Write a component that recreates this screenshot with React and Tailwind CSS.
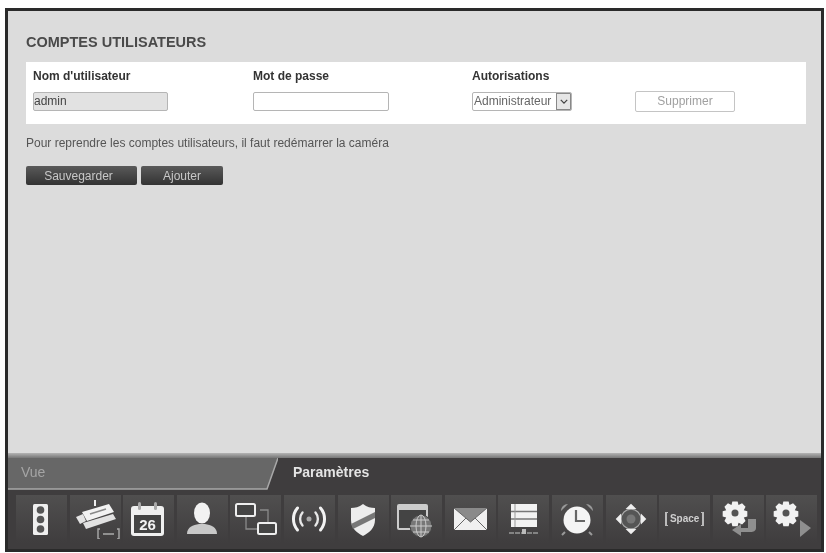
const Gear = () => (
  <g transform="translate(16 14) scale(0.88)">
    <path d="M-3-13h6l1 4 4-2 4 4-2 4 4 1v6l-4 1 2 4-4 4-4-2-1 4h-6l-1-4-4 2-4-4 2-4-4-1v-6l4-1-2-4 4-4 4 2z" fill="#f2f2f2" />
    <circle r="4" fill="#555" />
  </g>
);

const cells = [
  // feux
  <svg viewBox="0 0 40 40" className="w-10 h-10 -translate-x-[2px]" key="feux">
    <rect x="13" y="5" width="15" height="31" rx="1.5" fill="#efefef" />
    <circle cx="20.5" cy="11" r="3.8" fill="#555" />
    <circle cx="20.5" cy="20.5" r="3.8" fill="#555" />
    <circle cx="20.5" cy="30" r="3.8" fill="#555" />
  </svg>,
  // caméra
  <svg viewBox="0 0 48 40" className="w-12 h-10 translate-x-[2px]" key="cam">
    <path d="M22 1v6" stroke="#eee" strokeWidth="2" />
    <path d="M9 13 36 5l5 8-27 9z" fill="#f2f2f2" />
    <path d="M3 18l7-3 3 7-6 3z" fill="#e4e4e4" />
    <path d="M10 24 40 15l3 5-30 10z" fill="#e2e2e2" />
    <path d="M17 15 33 10" stroke="#888" strokeWidth="1.500" />
    <path d="M27 30h-2v10h2M44 30h2v10h-2M30 35h11" stroke="#aaa" strokeWidth="1.400" fill="none" />
  </svg>,
  // calendrier
  <svg viewBox="0 0 40 40" className="w-10 h-10 -translate-x-[2px]" key="cal">
    <rect x="4" y="7" width="33" height="30" rx="3" fill="#f0f0f0" />
    <rect x="7" y="16" width="27" height="18" fill="#444" />
    <rect x="11" y="3" width="3" height="8" rx="1.500" fill="#aaa" />
    <rect x="27" y="3" width="3" height="8" rx="1.500" fill="#aaa" />
    <text x="20.500" y="31" textAnchor="middle" fontSize="15" fontWeight="700" fill="#f2f2f2" fontFamily="Liberation Sans, sans-serif">26</text>
  </svg>,
  // utilisateur
  <svg viewBox="0 0 40 40" className="w-10 h-10" key="user">
    <ellipse cx="20" cy="14" rx="8" ry="10.500" fill="#f2f2f2" />
    <path d="M5 35c0-7 6-9 12-10h6c6 1 12 3 12 10z" fill="#c8c8c8" />
  </svg>,
  // réseau
  <svg viewBox="0 0 48 40" className="w-12 h-10" key="net">
    <path d="M14 18v12h14M28 11h8v12" stroke="#8a8a8a" strokeWidth="1.300" fill="none" />
    <rect x="4" y="5" width="19" height="12" rx="1.500" fill="#444" stroke="#eee" strokeWidth="2" />
    <rect x="26" y="24" width="18" height="11" rx="1.500" fill="#444" stroke="#eee" strokeWidth="2" />
  </svg>,
  // sans fil
  <svg viewBox="0 0 40 40" className="w-10 h-10" key="wifi">
    <circle cx="20" cy="20" r="2.500" fill="#aaa" />
    <path d="M13.500 13.500a10 10 0 0 0 0 13M26.500 13.500a10 10 0 0 1 0 13" stroke="#e8e8e8" strokeWidth="2.400" fill="none" strokeLinecap="round" />
    <path d="M8.500 9a17 17 0 0 0 0 22M31.500 9a17 17 0 0 1 0 22" stroke="#f2f2f2" strokeWidth="3" fill="none" strokeLinecap="round" />
  </svg>,
  // bouclier
  <svg viewBox="0 0 40 40" className="w-10 h-10" key="shield">
    <path d="M20 5c4 3 8 4 12 4v12c0 8-6 13-12 16C14 34 8 29 8 21V9c4 0 8-1 12-4z" fill="#ededed" />
    <path d="M8 25 32 13v6L10 30z" fill="#777" />
  </svg>,
  // web
  <svg viewBox="0 0 44 40" className="w-11 h-10" key="web">
    <rect x="3" y="6" width="29" height="24" rx="1" fill="#444" stroke="#ccc" strokeWidth="2" />
    <rect x="3" y="6" width="29" height="5" fill="#ccc" />
    <circle cx="26" cy="27" r="11" fill="#777" stroke="#444" strokeWidth="1" />
    <path d="M15 27h22M26 16v22M18 21h16M18 33h16" stroke="#ccc" strokeWidth="1" />
    <ellipse cx="26" cy="27" rx="5" ry="11" fill="none" stroke="#ccc" strokeWidth="1" />
  </svg>,
  // courrier
  <svg viewBox="0 0 40 40" className="w-10 h-10" key="mail">
    <rect x="4" y="9" width="33" height="22" fill="#f0f0f0" />
    <path d="M4 9h33L20.500 23z" fill="#8a8a8a" />
    <path d="M4 9l16.500 14L37 9M4 31l12-12M37 31 25 19" stroke="#666" strokeWidth="1" fill="none" />
  </svg>,
  // liste
  <svg viewBox="0 0 40 40" className="w-10 h-10 -translate-x-[1px]" key="list">
    <rect x="8" y="5" width="26" height="23" fill="#f2f2f2" />
    <path d="M8 12.500h26M8 20h26" stroke="#777" strokeWidth="1.500" />
    <path d="M12 5v23" stroke="#999" strokeWidth="1" />
    <path d="M6 34h29" stroke="#999" strokeWidth="1.500" strokeDasharray="5 1" />
    <rect x="19" y="30" width="4" height="5" fill="#bbb" />
  </svg>,
  // réveil
  <svg viewBox="0 0 40 40" className="w-10 h-10" key="clock">
    <path d="M4 12c0-4 3-7 7-7zM36 12c0-4-3-7-7-7z" fill="#999" />
    <path d="M8 33l-3 3M32 33l3 3" stroke="#999" strokeWidth="2" />
    <circle cx="20" cy="21" r="13.500" fill="#f4f4f4" />
    <path d="M19 11v11h9" stroke="#666" strokeWidth="2.200" fill="none" />
  </svg>,
  // directions
  <svg viewBox="0 0 40 40" className="w-9 h-9" key="pad">
    <circle cx="20" cy="20" r="11" fill="#555" stroke="#aaa" strokeWidth="1.200" />
    <circle cx="20" cy="20" r="5" fill="#777" />
    <path d="M20 3l6 6H14zM20 37l6-6H14zM3 20l6-6v12zM37 20l-6-6v12z" fill="#eee" />
  </svg>,
  // space
  <div key="space" className="flex items-center gap-[2px] text-[#cfcfcf] font-bold text-[10px] leading-none">
    <span className="w-[3px] h-[14px] border-l-2 border-y border-[#bbb]" />
    <span>Space</span>
    <span className="w-[3px] h-[14px] border-r-2 border-y border-[#bbb]" />
  </div>,
  // roue + retour
  <svg viewBox="0 0 44 40" className="w-11 h-10 translate-x-[3px]" key="gearback">
    <Gear />
    <path d="M37 20v9c0 3-3 4-5 4H22v4l-9-6 9-6v4h7v-9z" fill="#8f8f8f" />
  </svg>,
  // roue + lecture
  <svg viewBox="0 0 44 40" className="w-11 h-10" key="gearplay">
    <Gear />
    <path d="M30 21l11 8-11 9z" fill="#8f8f8f" />
  </svg>,
];

const Label = ({ children }) => (
  <div className="font-bold text-[12px] text-[#333] leading-3">{children}</div>
);

const App = () => {
  return (
    <div className="w-[826px] h-[553px] bg-white pt-2 pl-[5px] pr-[2px] pb-[1px] overflow-hidden font-['Liberation_Sans',Arial,sans-serif]">
      <div className="h-full flex flex-col border-[3px] border-[#2a2a2a] blur-[0.7px]">
        {/* Contenu */}
        <main className="flex-1 bg-[#dcdcdc] pt-6 pl-[18px] pr-[15px]">
          <h1 className="font-bold text-[14.5px] leading-[14px] text-[#4a4a4a]">COMPTES UTILISATEURS</h1>

          <div className="mt-[13px] h-[62px] bg-white pl-[7px] pt-2 flex">
            <div className="w-[220px]">
              <Label>Nom d'utilisateur</Label>
              <div className="mt-[10px] w-[135px] h-[19px] bg-[#e2e2e2] border border-[#b5b5b5] rounded-[2px] text-[12px] leading-[17px] text-[#444]">admin</div>
            </div>
            <div className="w-[219px]">
              <Label>Mot de passe</Label>
              <div className="mt-[10px] w-[136px] h-[19px] bg-white border border-[#b5b5b5] rounded-[2px]" />
            </div>
            <div className="w-[163px]">
              <Label>Autorisations</Label>
              <div className="mt-[10px] w-[100px] h-[19px] flex border border-[#b5b5b5] rounded-[2px] text-[12px] leading-[17px] text-[#666] pl-[1px] overflow-hidden">
                <span className="flex-1 whitespace-nowrap">Administrateur</span>
                <span className="shrink-0 w-[15px] h-[17px] bg-[#e6e6e6] border border-[#888] flex items-center justify-center">
                  <svg viewBox="0 0 10 6" className="w-2 h-[5px]"><path d="M1 1l4 4 4-4" stroke="#444" strokeWidth="1.600" fill="none" /></svg>
                </span>
              </div>
            </div>
            <div className="mt-[21px] w-[100px] h-[21px] border border-[#c4c4c4] rounded-[2px] text-center text-[12px] leading-[19px] text-[#a0a0a0]">Supprimer</div>
          </div>

          <p className="mt-[13px] text-[12px] leading-3 text-[#555]">Pour reprendre les comptes utilisateurs, il faut redémarrer la caméra</p>

          <div className="mt-[17px] flex gap-1">
            <button className="w-[111px] h-[19px] rounded-[2px] bg-gradient-to-b from-[#5a5a5a] to-[#333] text-[12px] text-[#c8c8c8] pr-[6px]">Sauvegarder</button>
            <button className="w-[82px] h-[19px] rounded-[2px] bg-gradient-to-b from-[#5a5a5a] to-[#333] text-[12px] text-[#c8c8c8]">Ajouter</button>
          </div>
        </main>

        <div className="h-[5px] shrink-0 bg-gradient-to-b from-[#b4b4b4] to-[#777]" />

        {/* Onglets */}
        <div className="h-[32px] shrink-0 bg-[#3f3d3e] flex">
          <div className="relative w-[270px] h-full">
            <svg viewBox="0 0 270 32" preserveAspectRatio="none" className="absolute inset-0 w-full h-full">
              <path d="M0 0H270L259 31H0z" fill="#676767" />
              <path d="M0 31H259L270 0" stroke="#a8a8a8" strokeWidth="1.500" fill="none" />
            </svg>
            <span className="relative pl-[13px] text-[14px] leading-[29px] text-[#a5a5a5]">Vue</span>
          </div>
          <span className="ml-[15px] font-bold text-[14px] leading-[29px] text-[#e4e4e4]">Paramètres</span>
        </div>

        {/* Barre d'icônes */}
        <nav className="h-[59px] shrink-0 bg-[#3f3d3e] pl-2 pt-[5px] flex gap-[2.6px]">
          {cells.map((icon, i) => (
            <div key={i} className="w-[51px] h-[48px] bg-gradient-to-b from-[#504f4f] to-[#3f3d3e] flex items-center justify-center">
              {icon}
            </div>
          ))}
        </nav>
      </div>
    </div>
  );
};

export default App;
